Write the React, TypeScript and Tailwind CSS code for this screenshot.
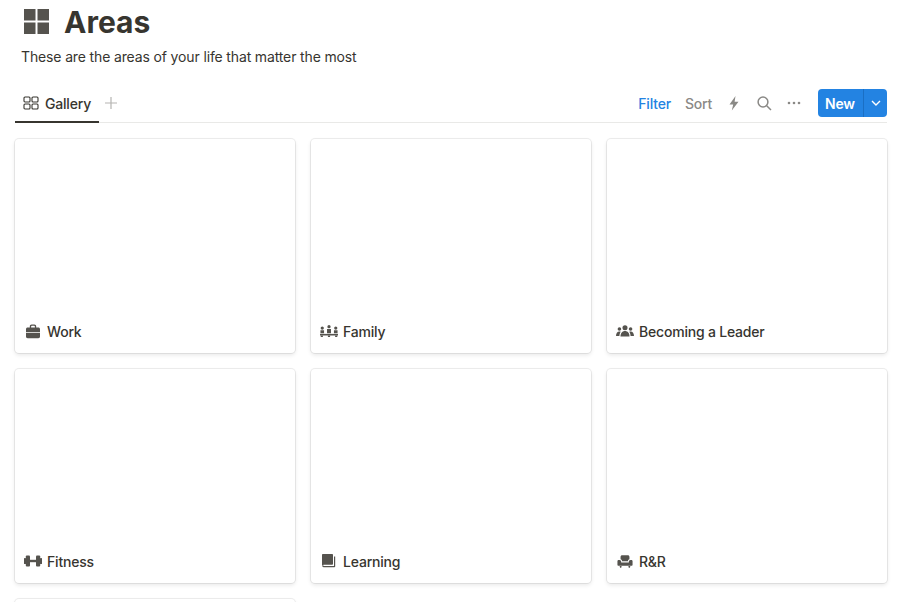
import type { ReactNode } from "react";

const inkIcon = "#55534e";

function GalleryIcon() {
  return (
    <svg width="16" height="14" viewBox="0 0 16 14" fill="none" stroke="#37352f" strokeWidth="1.1">
      <rect x="1" y="1" width="6" height="5" rx="1" />
      <rect x="9" y="1" width="6" height="5" rx="1" />
      <rect x="1" y="8" width="6" height="5" rx="1" />
      <rect x="9" y="8" width="6" height="5" rx="1" />
    </svg>
  );
}

function WorkIcon() {
  return (
    <svg width="16" height="15" viewBox="0 0 16 15" fill={inkIcon}>
      <path d="M4.800 4V2.400C4.800 1.200 5.600.5 6.600.5h2.800c1 0 1.800.7 1.800 1.900V4H9.900V2.700c0-.6-.3-.9-.8-.9H6.900c-.5 0-.8.3-.8.9V4H4.800z" />
      <path d="M2.700 3.600h10.600c1 0 1.700.7 1.700 1.700V8H1V5.300c0-1 .7-1.700 1.700-1.700z" />
      <path d="M1 8.800h14v3.700c0 1-.7 1.700-1.700 1.700H2.700c-1 0-1.700-.7-1.700-1.700V8.800z" />
    </svg>
  );
}

function FamilyIcon() {
  return (
    <svg width="20" height="14" viewBox="0 0 20 14" fill={inkIcon}>
      <circle cx="2.500" cy="3.800" r="1.800" />
      <circle cx="10" cy="2.200" r="1.800" />
      <circle cx="17.500" cy="3.800" r="1.800" />
      <path d="M.5 6.200h4v3.300h-4zM7.800 4.700h4.400v4.800H7.800zM15.500 6.200h4v3.300h-4z" />
      <path d="M0 10.200h20V12H0z" />
      <path d="M.8 12h2.400v1.800H.8zM8.800 12h2.400v1.800H8.800zM16.800 12h2.400v1.800h-2.400z" />
    </svg>
  );
}

function LeaderIcon() {
  return (
    <svg width="20" height="14" viewBox="0 0 20 14" fill={inkIcon}>
      <circle cx="10" cy="3.500" r="2.800" />
      <circle cx="3.800" cy="4.800" r="2" />
      <circle cx="16.200" cy="4.800" r="2" />
      <path d="M5 13c0-3.600 2-6 5-6s5 2.400 5 6H5z" />
      <path d="M0 12.500c0-3 1.400-5 3.800-5 .6 0 1 .1 1.400.3C4.300 9 3.900 10.600 3.800 12.500H0z" />
      <path d="M20 12.500c0-3-1.400-5-3.800-5-.6 0-1 .1-1.400.3.900 1.200 1.300 2.800 1.400 4.700H20z" />
    </svg>
  );
}

function FitnessIcon() {
  return (
    <svg width="18" height="12" viewBox="0 0 18 12" fill={inkIcon}>
      <rect x="0" y="3" width="2" height="6" rx=".6" />
      <rect x="1.800" y="0.500" width="4.200" height="11" rx="1" />
      <rect x="6" y="4.800" width="6" height="2.400" />
      <rect x="12" y="0.500" width="4.200" height="11" rx="1" />
      <rect x="16" y="3" width="2" height="6" rx=".6" />
    </svg>
  );
}

function LearningIcon() {
  return (
    <svg width="16" height="16" viewBox="0 0 16 16" fill={inkIcon}>
      <path d="M1.800 1h9.400c.5 0 .8.300.8.800V11c0 .5-.3.800-.8.800H3c-.8 0-1.500.3-2 .8V1.800c0-.5.300-.8.800-.8z" />
      <path d="M13 3.500h1.200v10c0 .5-.3.800-.8.800H3.500c-1.400 0-2.500-.8-2.500-1.800h1.500c.2.400.6.600 1 .6H13V3.500z" />
    </svg>
  );
}

function ChairIcon() {
  return (
    <svg width="16" height="13" viewBox="0 0 18 14" fill={inkIcon}>
      <path d="M4 1.800C4 .8 4.800 0 5.800 0h6.400c1 0 1.800.8 1.800 1.800V4.600c-1 .3-1.700 1-1.700 2.200H5.700c0-1.200-.7-1.900-1.700-2.200V1.800z" />
      <path d="M.5 6.500C.5 5.700 1.200 5.200 2 5.200h.8c1 0 1.900.8 1.900 1.900V8h8.600v-.900c0-1.100.9-1.900 1.900-1.900h.8c.8 0 1.500.5 1.500 1.300V11c0 .5-.4.900-.9.900H1.400c-.5 0-.9-.4-.9-.9V6.500z" />
      <path d="M3 12h2.200l-.4 2H3.400zM12.800 12H15l-.4 2h-1.400z" />
    </svg>
  );
}

function Card({ icon, label }: { icon?: ReactNode; label?: string }) {
  return (
    <div className="h-[214px] rounded-[4px] bg-white shadow-[0_0_0_1px_rgba(15,15,15,0.07),0_2px_4px_rgba(15,15,15,0.1)] flex flex-col justify-end">
      <div className="flex items-center h-[20px] mb-[12px] pl-[9px] gap-[5px] text-[14px] font-medium tracking-[-0.2px] text-[#37352f]">
        <span className="w-[18px] flex justify-center shrink-0">{icon}</span>
        <span>{label}</span>
      </div>
    </div>
  );
}

export default function App() {
  return (
    <div className="h-[602px] w-[905px] overflow-hidden bg-white text-[#37352f] font-['Inter',sans-serif]">
      <div className="flex items-center h-[44px] pl-[24px] gap-[15px]">
        <svg width="25" height="25" viewBox="0 0 25 25" fill="#55534e" className="mt-[-1px]">
          <rect x="0" y="0" width="11.500" height="11.500" />
          <rect x="13.500" y="0" width="11.500" height="11.500" />
          <rect x="0" y="13.500" width="11.500" height="11.500" />
          <rect x="13.500" y="13.500" width="11.500" height="11.500" />
        </svg>
        <h1 className="text-[30px] leading-none font-bold">Areas</h1>
      </div>
      <p className="pl-[21px] mt-[3px] text-[14px] leading-[20px] tracking-[-0.14px]">
        These are the areas of your life that matter the most
      </p>

      <div className="ml-[15px] mr-[18px] mt-[19px] h-[37px] border-b border-[#e9e9e7] flex items-center justify-between">
        <div className="relative flex items-center h-full pl-[8px] pb-[2px] gap-[6px] text-[14px] font-medium tracking-[-0.2px]">
          <GalleryIcon />
          <span>Gallery</span>
          <span className="ml-[7px] mt-[-1px] text-[#b5b4b1]">
            <svg width="14" height="14" viewBox="0 0 14 14" stroke="currentColor" strokeWidth="1.200">
              <path d="M7 1v12M1 7h12" />
            </svg>
          </span>
          <div className="absolute left-0 bottom-[-1px] w-[84px] h-[2px] bg-[#37352f]" />
        </div>
        <div className="flex items-center h-full pb-[2px] text-[14px] font-medium tracking-[-0.2px]">
          <span className="text-[#2383e2]">Filter</span>
          <span className="ml-[14px] text-[#8a8986]">Sort</span>
          <svg width="10" height="15" viewBox="0 0 10 15" fill="#8a8986" className="ml-[17px]">
            <path d="M6.500 0L.5 8.500h3.700L2.800 14.500 9.500 5.800H5.600L6.500 0z" />
          </svg>
          <svg width="15" height="15" viewBox="0 0 15 15" fill="none" stroke="#8a8986" strokeWidth="1.500" className="ml-[18px]">
            <circle cx="6" cy="6" r="4.900" />
            <path d="M9.700 9.700L14 14" />
          </svg>
          <svg width="14" height="4" viewBox="0 0 14 4" fill="#8a8986" className="ml-[15px]">
            <circle cx="2" cy="2" r="1.300" />
            <circle cx="7" cy="2" r="1.300" />
            <circle cx="12" cy="2" r="1.300" />
          </svg>
          <div className="ml-[17px] flex h-[28px] w-[69px] rounded-[4px] bg-[#2383e2] text-white overflow-hidden">
            <span className="flex-1 flex items-center justify-center pr-[1px] font-semibold border-r border-[#1a6fc4]">New</span>
            <span className="w-[23px] flex items-center justify-center">
              <svg width="10" height="6" viewBox="0 0 10 6" fill="none" stroke="white" strokeWidth="1.400">
                <path d="M1 1l4 4 4-4" />
              </svg>
            </span>
          </div>
        </div>
      </div>

      <div className="ml-[15px] mr-[18px] mt-[16px] grid grid-cols-3 gap-x-[16px] gap-y-[16px]">
        <Card icon={<WorkIcon />} label="Work" />
        <Card icon={<FamilyIcon />} label="Family" />
        <Card icon={<LeaderIcon />} label="Becoming a Leader" />
        <Card icon={<FitnessIcon />} label="Fitness" />
        <Card icon={<LearningIcon />} label="Learning" />
        <Card icon={<ChairIcon />} label="R&R" />
        <Card />
      </div>
    </div>
  );
}
